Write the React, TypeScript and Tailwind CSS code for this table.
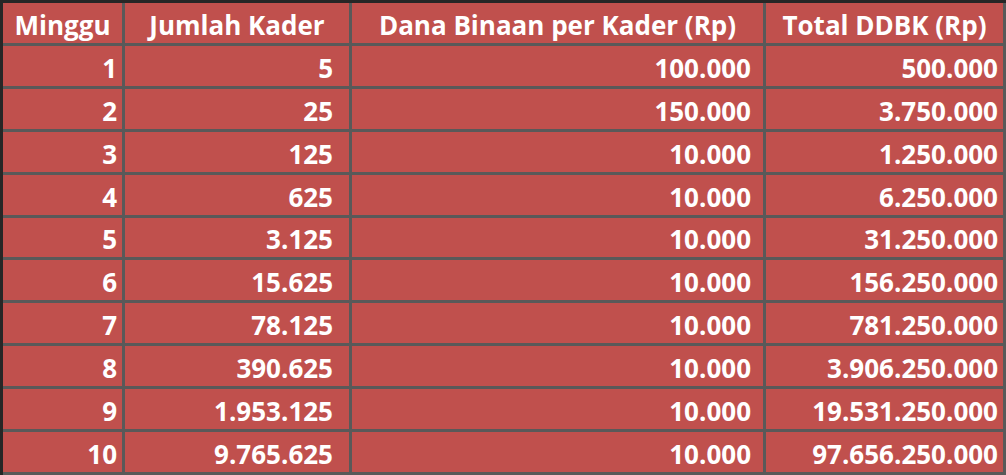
import React from 'react';

const rows = [
  ['1', '5', '100.000', '500.000'],
  ['2', '25', '150.000', '3.750.000'],
  ['3', '125', '10.000', '1.250.000'],
  ['4', '625', '10.000', '6.250.000'],
  ['5', '3.125', '10.000', '31.250.000'],
  ['6', '15.625', '10.000', '156.250.000'],
  ['7', '78.125', '10.000', '781.250.000'],
  ['8', '390.625', '10.000', '3.906.250.000'],
  ['9', '1.953.125', '10.000', '19.531.250.000'],
  ['10', '9.765.625', '10.000', '97.656.250.000'],
];

const headers = ['Minggu', 'Jumlah Kader', 'Dana Binaan per Kader (Rp)', 'Total DDBK (Rp)'];
const pads = ['pr-[5px]', 'pr-[16px]', 'pr-[12px]', 'pr-[5px]'];

export default function App() {
  return (
    <div
      className="w-[1006px] h-[475px] bg-[#595959] border-t-[3px] border-l-[3px] border-[#262626] pr-[3px] pb-[3px] grid grid-cols-[119px_224px_411px_1fr] grid-rows-[repeat(11,1fr)] gap-x-[3px] gap-y-[3px] text-white font-bold text-[26px] leading-none"
      style={{ fontFamily: '"Open Sans", "Liberation Sans", sans-serif' }}
    >
      {headers.map((h) => (
        <div key={h} className="bg-[#c0504d] flex items-end justify-center pb-[5px] whitespace-nowrap">
          {h}
        </div>
      ))}
      {rows.map((r, i) =>
        r.map((c, j) => (
          <div key={i + '-' + j} className={`bg-[#c0504d] flex items-end justify-end pb-[5px] whitespace-nowrap ${pads[j]}`}>
            {c}
          </div>
        ))
      )}
    </div>
  );
}
